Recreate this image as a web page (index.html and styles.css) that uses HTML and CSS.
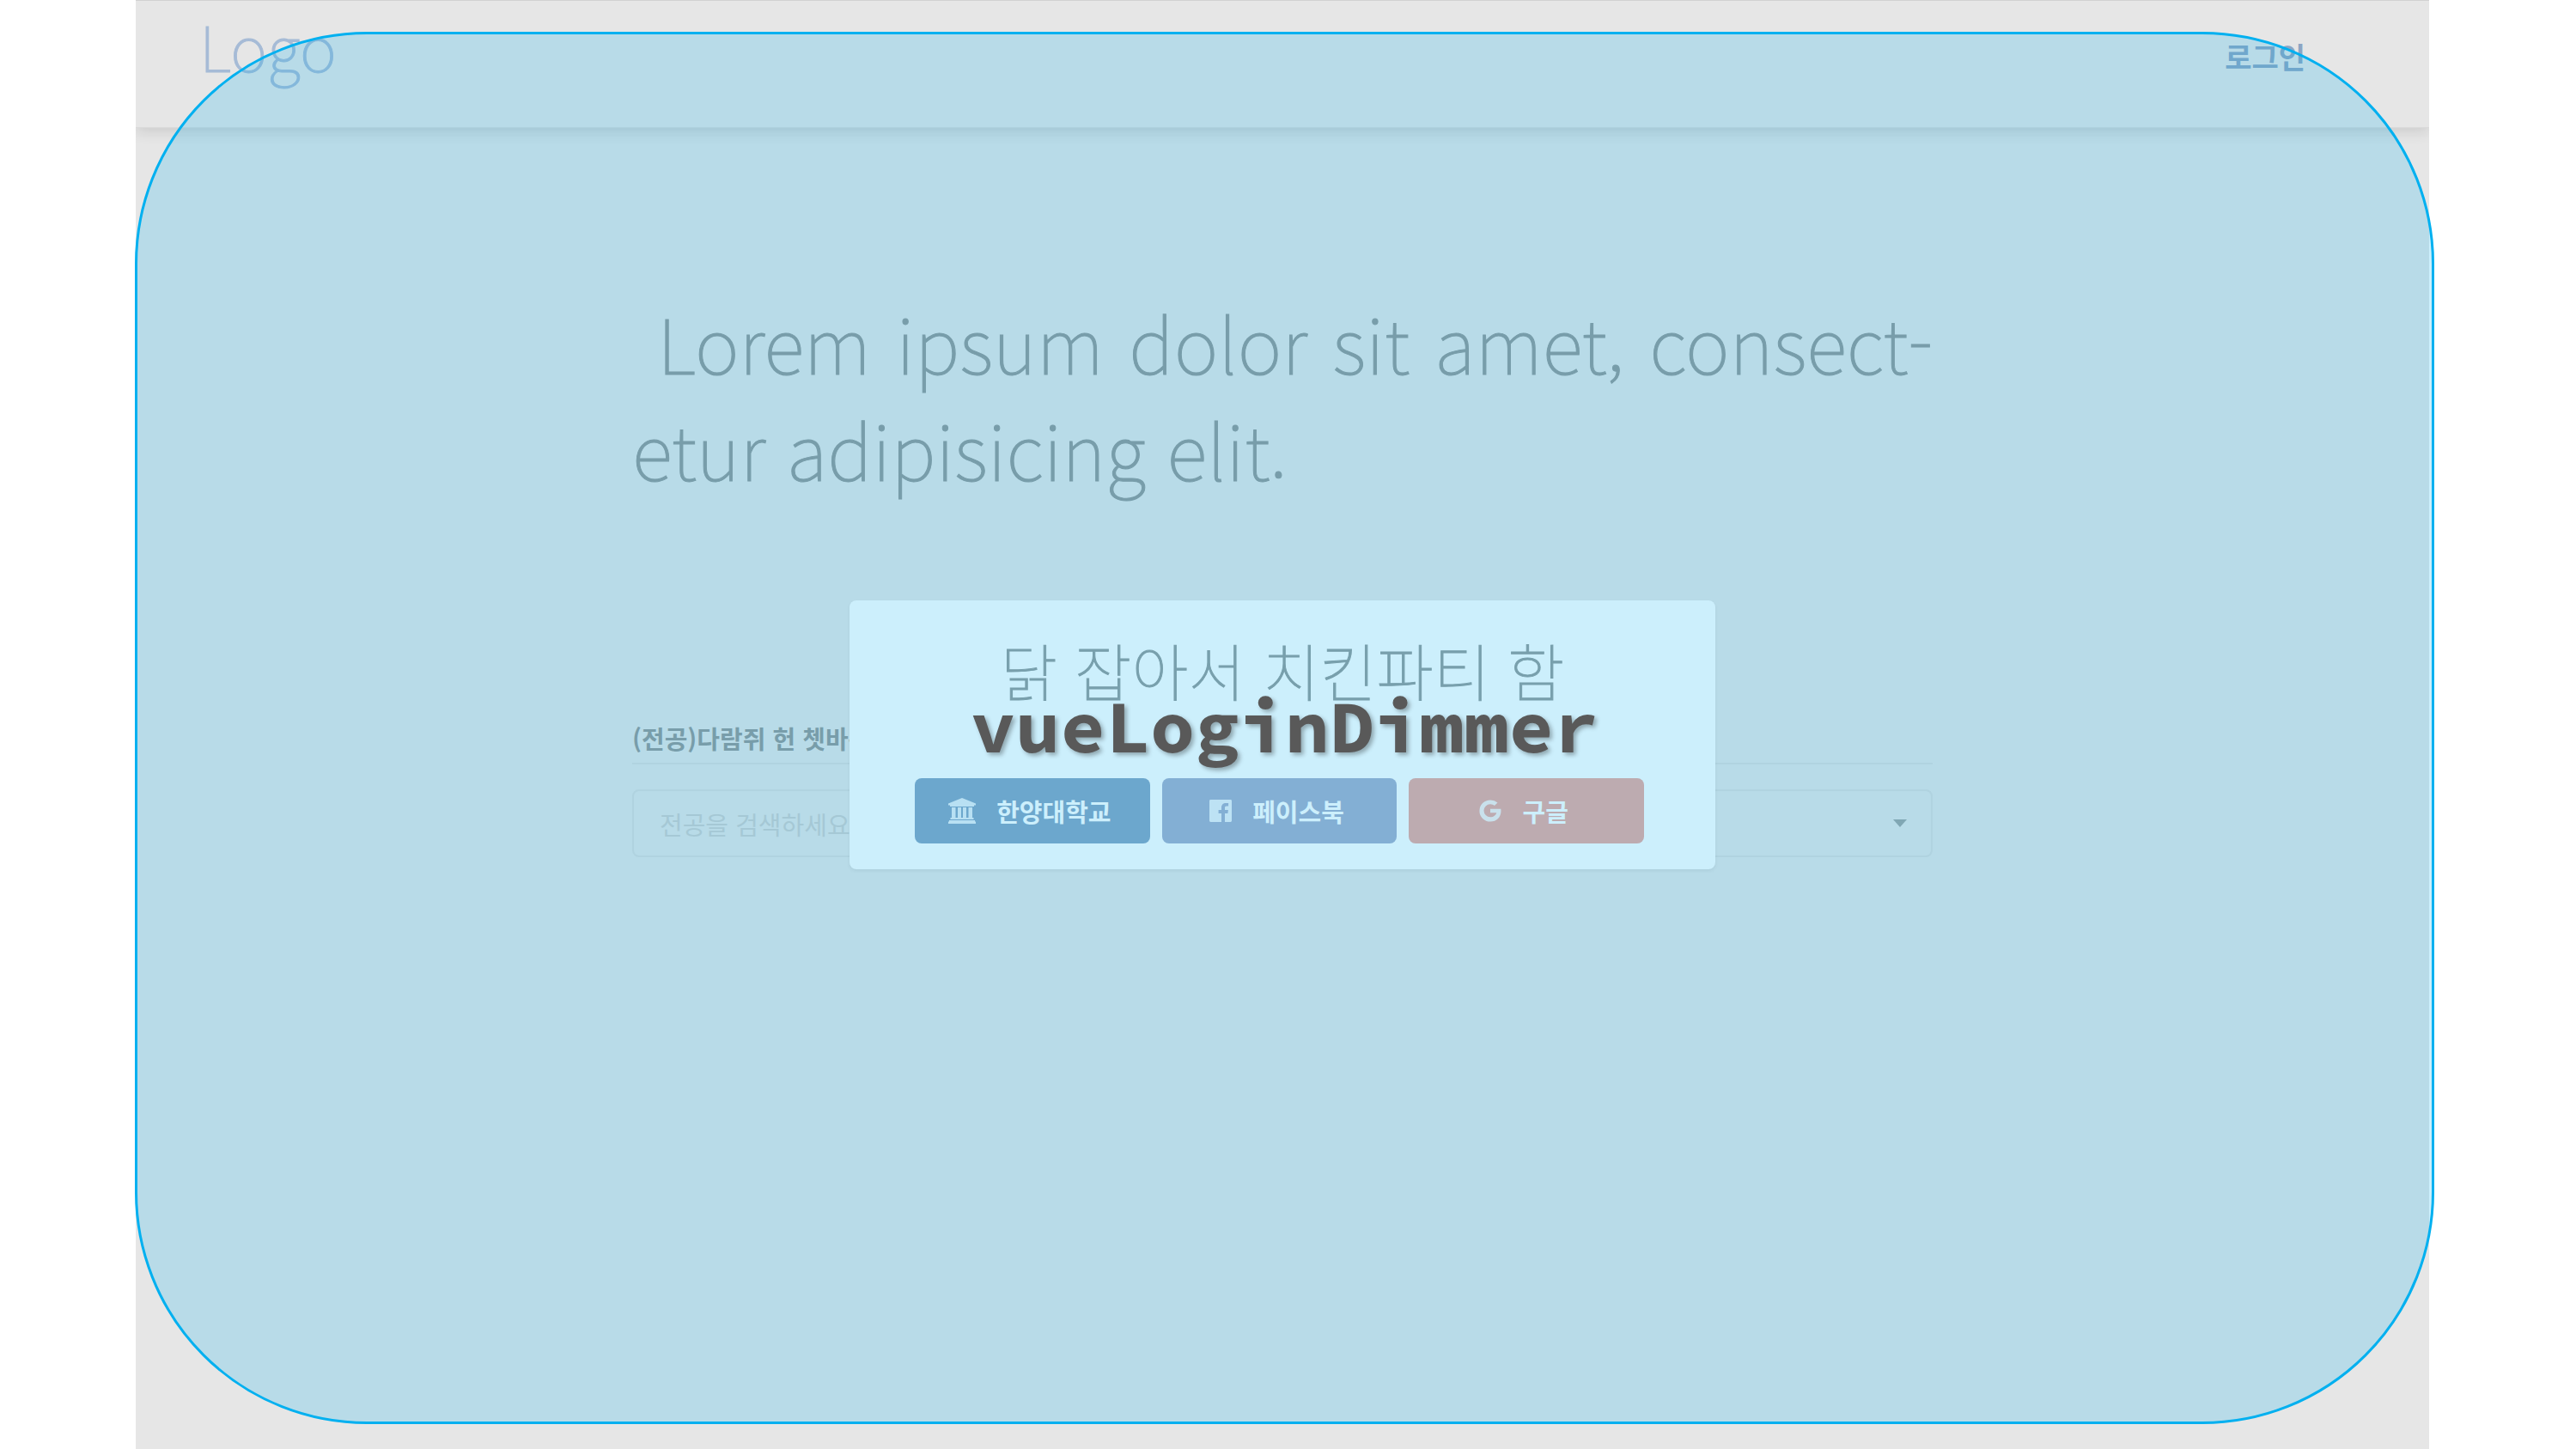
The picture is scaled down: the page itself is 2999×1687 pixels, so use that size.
FILE: index.html
```html
<!DOCTYPE html>
<html lang="ko">
<head>
<meta charset="utf-8">
<title>vueLoginDimmer</title>
<link rel="stylesheet" href="styles.css">
</head>
<body>
<div class="stage">
  <header class="nav">
    <a class="logo" href="#">Logo</a>
    <a class="login" href="#">로그인</a>
  </header>
  <main class="content">
    <h1 class="title">&nbsp;Lorem ipsum dolor sit amet, consect-etur adipisicing elit.</h1>
    <label class="field-label" for="major">(전공)다람쥐 헌 쳇바퀴에 타고파</label>
    <div class="search">
      <input class="search-input" id="major" type="text" placeholder="전공을 검색하세요">
      <svg class="caret" viewBox="0 0 16 10" aria-hidden="true"><path d="M0 0h16L8 9z"/></svg>
    </div>
  </main>
  <div class="dimmer">
    <section class="modal">
      <h2 class="modal-title">닭 잡아서 치킨파티 함</h2>
      <div class="buttons">
        <button class="btn btn-univ" type="button">
          <svg class="icon" viewBox="0 0 32 30" aria-hidden="true"><path d="M16 0 32 6.500v2h-2V10H2V8.500H0v-2zM4 11h4.500v12H11V11h4v12h2V11h4v12h2.500V11H28v12h1.500v2h-27v-2H4zM1 26h30v1.500h1V30H0v-2.500h1z"/></svg>
          <span>한양대학교</span>
        </button>
        <button class="btn btn-facebook" type="button">
          <svg class="icon icon-square" viewBox="0 0 26 26" aria-hidden="true"><path d="M1.400 0h23.200Q26 0 26 1.400v23.200q0 1.400-1.400 1.400H18V16h3.400l.5-4H18V9.500c0-1.200.4-2 2-2h2.100V4.100c-.4 0-1.600-.2-3-.2-3 0-5.100 1.900-5.100 5.300V12h-3.400v4H14v10H1.400Q0 26 0 24.600V1.400Q0 0 1.400 0z"/></svg>
          <span>페이스북</span>
        </button>
        <button class="btn btn-google" type="button">
          <svg class="icon icon-square" viewBox="0 0 26 26" aria-hidden="true"><path d="M13 10.700v4.500h7.300c-.8 2.800-3.300 5.100-7.300 5.100a7.500 7.500 0 0 1 0-15c1.900 0 3.600.7 4.900 1.800l3.600-3.600A12.600 12.600 0 0 0 13 .4a12.600 12.600 0 0 0 0 25.200c7.500 0 12.500-5.200 12.500-12.600 0-.8-.1-1.600-.2-2.300z"/></svg>
          <span>구글</span>
        </button>
      </div>
    </section>
  </div>
  <div class="highlight">vueLoginDimmer</div>
</div>
</body>
</html>
```
FILE: styles.css
```css
* {
  box-sizing: border-box;
}

body {
  margin: 0;
  background: #fff;
  font-family: "Noto Sans CJK KR", "Noto Sans", sans-serif;
  font-size: 29px;
  line-height: 40px;
}

.stage {
  position: relative;
  min-height: 100vh;
  margin: 0 171px 0 158px;
  background: #e6e6e6;
}

.nav {
  display: flex;
  justify-content: space-between;
  align-items: flex-start;
  height: 149px;
  padding: 0 144px 0 74px;
  border-top: 1px solid #d2d2d2;
  border-bottom: 1px solid #dadada;
  box-shadow: 0 4px 16px rgba(0, 0, 0, 0.12);
  clip-path: inset(0 0 -24px 0);
}

.nav a {
  text-decoration: none;
}

.logo {
  color: #a6bbd6;
  font-size: 73px;
  font-weight: 100;
  line-height: 102px;
  -webkit-text-stroke: 1px #a6bbd6;
}

.login {
  margin-top: 35px;
  color: #8ca5c4;
  font-size: 34px;
  font-weight: 700;
  line-height: 60px;
}

.content {
  max-width: 1514px;
  margin: 0 auto;
  padding-top: 187px;
}

.title {
  margin: 0 0 255px;
  color: #969999;
  font-size: 88px;
  font-weight: 100;
  line-height: 124px;
  text-align: justify;
  -webkit-text-stroke: 1px #969999;
}

.field-label {
  display: block;
  padding-bottom: 9px;
  border-bottom: 2px solid #dcdcdc;
  color: #969999;
  font-weight: 700;
}

.search {
  position: relative;
  margin-top: 29px;
}

.search-input {
  width: 100%;
  height: 79px;
  padding: 0 30px;
  border: 2px solid #dcdcdc;
  border-radius: 8px;
  background: transparent;
  font: inherit;
}

.search-input::placeholder {
  color: #cfcfcf;
  opacity: 1;
}

.caret {
  position: absolute;
  top: 35px;
  right: 30px;
  width: 16px;
  height: 10px;
  fill: #a0a5a5;
}

.dimmer {
  position: absolute;
  inset: 0;
  display: grid;
  place-items: center;
  padding-top: 24px;
}

.modal {
  width: 1008px;
  padding: 28px 76px 30px;
  border-radius: 8px;
  background: #fff;
  box-shadow: 0 2px 4px rgba(0, 0, 0, 0.06);
}

.modal-title {
  margin: 0 0 75px;
  color: #969c9c;
  font-size: 72px;
  font-weight: 100;
  line-height: 104px;
  text-align: center;
  -webkit-text-stroke: 1px #969c9c;
}

.buttons {
  display: grid;
  grid-template-columns: repeat(3, 1fr);
  gap: 14px;
  padding-right: 7px;
}

.btn {
  display: flex;
  justify-content: center;
  align-items: center;
  gap: 24px;
  height: 76px;
  padding: 0 6px 0 0;
  border: 0;
  border-radius: 8px;
  color: #fff;
  font: inherit;
  font-weight: 700;
}

.btn-univ {
  background: #88a6c5;
}

.btn-facebook {
  background: #a4afce;
}

.btn-google {
  background: #edaaa1;
}

.icon {
  width: 32px;
  height: 30px;
  fill: rgba(255, 255, 255, 0.8);
}

.icon-square {
  width: 26px;
  height: 26px;
}

.highlight {
  position: absolute;
  inset: 37px -6px 29px -1px;
  display: grid;
  place-items: center;
  padding-bottom: 6px;
  border: 3px solid #00b0f0;
  border-radius: 270px;
  background: rgba(0, 174, 240, 0.2);
  color: #595959;
  font-family: "Source Code Pro", "Noto Sans Mono CJK KR", "DejaVu Sans Mono", monospace;
  font-size: 87px;
  font-weight: 700;
  line-height: 120px;
  text-shadow: 3px 3px 5px rgba(0, 0, 0, 0.3);
  pointer-events: none;
}
```
